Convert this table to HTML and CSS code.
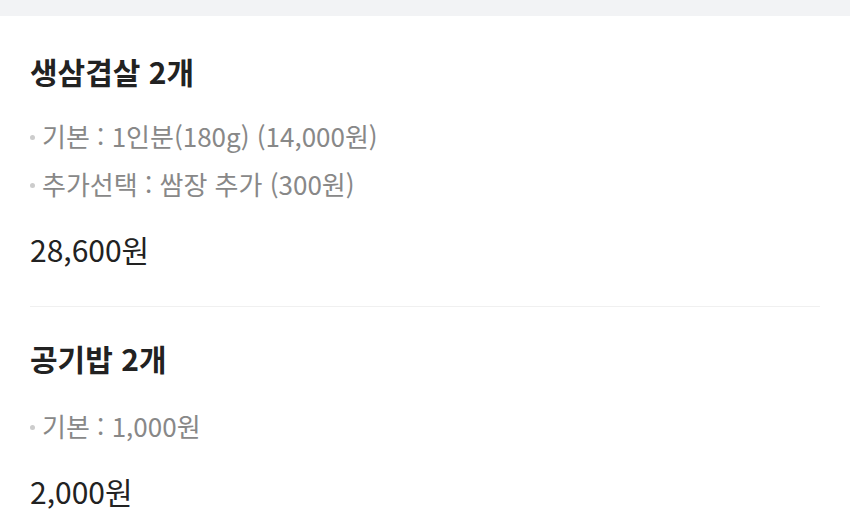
FILE: index.html
```html
<!DOCTYPE html>
<html lang="ko">
<head>
  <meta charset="UTF-8">
  <meta name="viewport" content="width=device-width, initial-scale=1.0">
  <title>주문 내역</title>
  <link rel="stylesheet" href="styles.css">
</head>
<body>

  <div class="top-bar"></div>

  <!-- 주문 메뉴 목록 -->
  <div class="order-list">
    <div class="order-item">
      <h2 class="item-name">생삼겹살 2개</h2>
      <ul class="item-options">
        <li>기본 : 1인분(180g) (14,000원)</li>
        <li>추가선택 : 쌈장 추가 (300원)</li>
      </ul>
      <div class="item-price">28,600원</div>
    </div>

    <div class="order-item">
      <h2 class="item-name">공기밥 2개</h2>
      <ul class="item-options">
        <li>기본 : 1,000원</li>
      </ul>
      <div class="item-price">2,000원</div>
    </div>
  </div>

</body>
</html>
```

FILE: styles.css
```css
body {
  font-family: "Noto Sans CJK KR", "Noto Sans", sans-serif;
  margin: 0;
  padding: 0;
  background-color: #fff;
  color: #222;
}

.top-bar {
  height: 16px;
  background-color: #f2f3f5;
}

.order-list {
  padding: 0 30px;
}

.order-item {
  padding: 36px 0 39px;
  border-bottom: 1px solid #f0f0f0;
}

.order-item + .order-item {
  padding-top: 32px;
}

.order-item:last-child {
  padding-bottom: 0;
  border-bottom: none;
}

.item-name {
  margin: 0;
  font-size: 30px;
  font-weight: bold;
  line-height: 39px;
  color: #222;
}

.item-options {
  list-style: none;
  margin: 21px 0 0;
  padding: 0;
}

.order-item + .order-item .item-options {
  margin-top: 24px;
}

.item-options li {
  position: relative;
  padding-left: 12px;
  font-size: 26px;
  line-height: 48px;
  color: #888;
}

.item-options li::before {
  content: "";
  position: absolute;
  left: 0;
  top: 23px;
  width: 5px;
  height: 5px;
  border-radius: 50%;
  background-color: #ccc;
}

.item-price {
  margin-top: 23px;
  font-size: 30px;
  line-height: 36px;
  color: #222;
}
```
